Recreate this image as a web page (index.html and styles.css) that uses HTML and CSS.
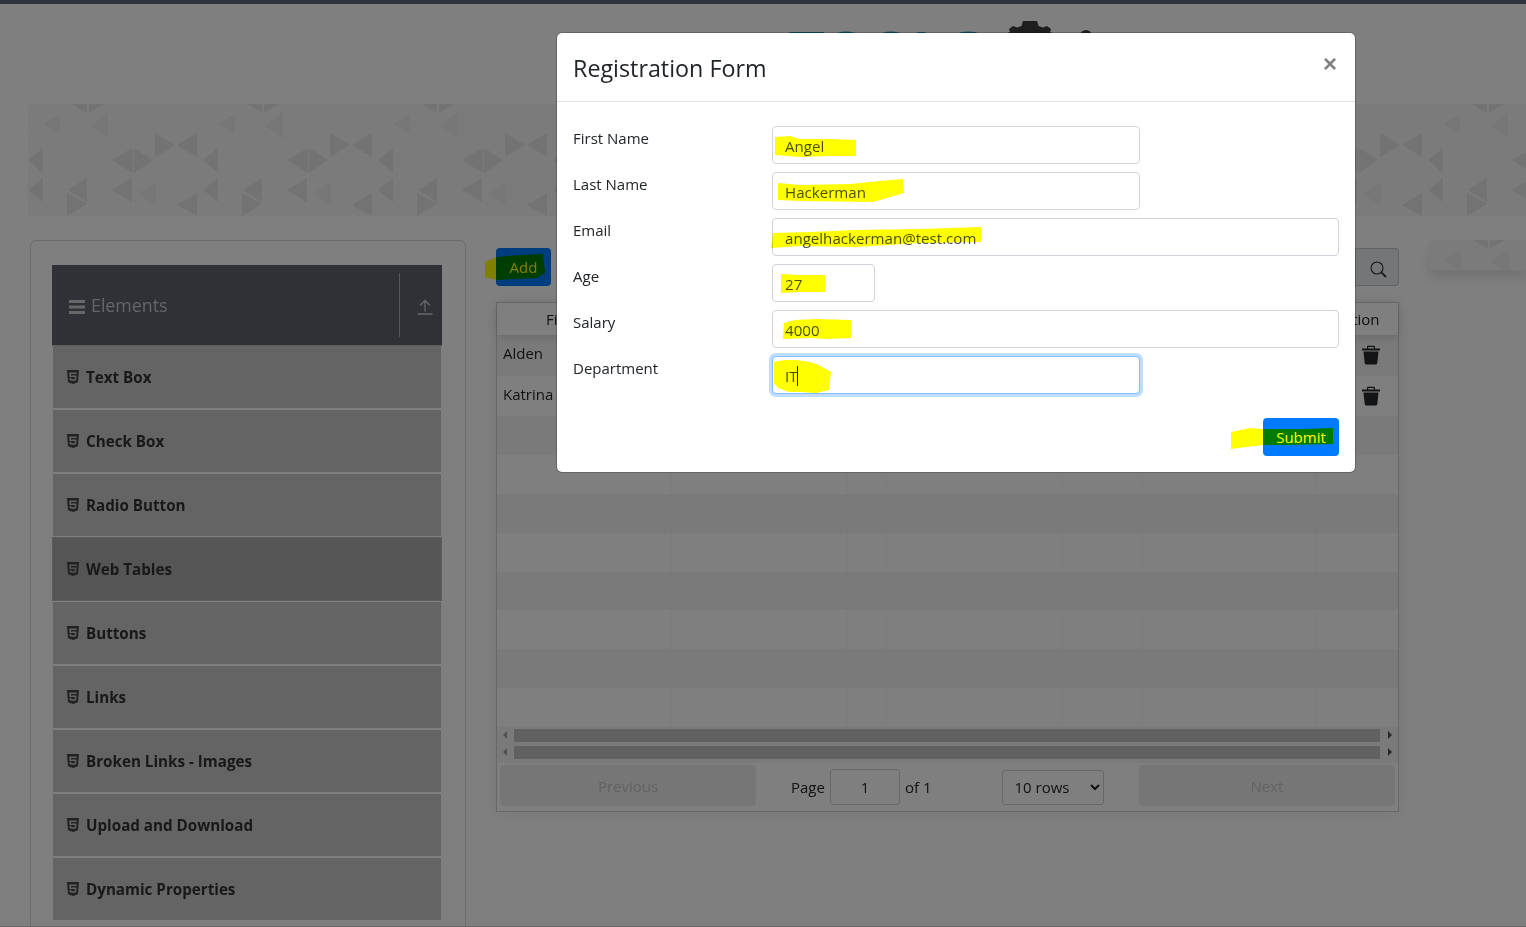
FILE: index.html
```html
<!DOCTYPE html>
<html lang="en">
<head>
<meta charset="utf-8">
<title>Registration Form</title>
<link rel="stylesheet" href="styles.css">
</head>
<body>
<svg class="defs" width="0" height="0" aria-hidden="true">
  <defs>
    <pattern id="tri" patternUnits="userSpaceOnUse" width="175" height="112">
      <rect width="175" height="112" fill="#f6f6f6"/>
      <g fill="none" stroke="#fcfcfc" stroke-width="1">
        <path d="M15 0V112M59 0V112M105 0V112M149 0V112"/>
        <path d="M0 26L44 0M59 0L105 26L149 0M0 56L59 22L105 56L149 26L175 11M0 86L59 52L105 86L149 56L175 41M0 56L59 86L105 112M105 26L175 70M59 22L0 0M0 86L44 112M149 112L175 96M105 86L59 112"/>
      </g>
      <g fill="#e6e6e6">
        <polygon points="0,56 15,44 15,69"/>
        <polygon points="84,56 105,44 105,69"/>
        <polygon points="106,44 106,69 125,56"/>
        <polygon points="127,29 127,53 147,41"/>
        <polygon points="149,41 169,29 169,53"/>
        <polygon points="59,74 59,98 40,86"/>
        <polygon points="0,86 15,74 15,98"/>
        <polygon points="84,86 104,74 104,98"/>
        <polygon points="39,89 39,112 59,100"/>
        <polygon points="169,89 169,112 149,101"/>
        <polygon points="44,0 59,0 59,9"/>
        <polygon points="61,0 76,0 61,9"/>
      </g>
      <g fill="#eeeeee">
        <polygon points="62,22 80,8 80,34"/>
        <polygon points="15,20 32,10 32,30"/>
        <polygon points="110,90 128,78 128,102"/>
      </g>
    </pattern>
  </defs>
</svg>

<div class="page">
  <div class="topbar"></div>
  <header class="site-header">
    <a class="logo" href="#">
      <span class="logo-word">TOOLS</span>
      <svg class="logo-gear" width="100" height="40" viewBox="0 0 100 40" aria-hidden="true">
        <path class="gear" d="M18 1H32L33.5 6L38 7.5L42 6L46 9L45 12L50 14V40H0V14L5 12L4 9L8 6L12 7.5L16.5 6Z"/>
        <circle class="gear" cx="81" cy="16" r="6"/>
      </svg>
    </a>
  </header>
  <svg class="banner" width="100%" height="112" aria-hidden="true"><rect width="100%" height="112" fill="url(#tri)"/></svg>

  <main class="main">
    <aside class="side-card">
      <div class="group-head">
        <div class="group-title">
          <svg class="menu-ico" width="16" height="16" viewBox="0 0 16 16" aria-hidden="true"><path d="M0 1h16v3H0zM0 6.5h16v3H0zM0 12h16v3H0z"/></svg>
          <span>Elements</span>
        </div>
        <div class="group-toggle">
          <svg width="16" height="16" viewBox="0 0 16 16" aria-hidden="true"><path d="M0.5 15h15M8 12.5V1.5M3 6.5l5-5 5 5" fill="none" stroke-width="1.3"/></svg>
        </div>
      </div>
      <ul class="menu">
        <li class="menu-item"><svg class="h5" viewBox="0 0 384 512" aria-hidden="true"><path d="M0 32l34.9 395.8L191.5 480l157.6-52.2L384 32H0zm308.2 127.9H124.4l4.1 49.4h175.6l-13.6 148.4-97.9 27v.3h-1.1l-98.7-27.3-6-75.8h47.7L138 320l53.5 14.5 53.7-14.5 6-62.2H84.3L71.5 112.2h241.1l-4.4 47.7z"/></svg>Text Box</li>
        <li class="menu-item"><svg class="h5" viewBox="0 0 384 512" aria-hidden="true"><path d="M0 32l34.9 395.8L191.5 480l157.6-52.2L384 32H0zm308.2 127.9H124.4l4.1 49.4h175.6l-13.6 148.4-97.9 27v.3h-1.1l-98.7-27.3-6-75.8h47.7L138 320l53.5 14.5 53.7-14.5 6-62.2H84.3L71.5 112.2h241.1l-4.4 47.7z"/></svg>Check Box</li>
        <li class="menu-item"><svg class="h5" viewBox="0 0 384 512" aria-hidden="true"><path d="M0 32l34.9 395.8L191.5 480l157.6-52.2L384 32H0zm308.2 127.9H124.4l4.1 49.4h175.6l-13.6 148.4-97.9 27v.3h-1.1l-98.7-27.3-6-75.8h47.7L138 320l53.5 14.5 53.7-14.5 6-62.2H84.3L71.5 112.2h241.1l-4.4 47.7z"/></svg>Radio Button</li>
        <li class="menu-item active"><svg class="h5" viewBox="0 0 384 512" aria-hidden="true"><path d="M0 32l34.9 395.8L191.5 480l157.6-52.2L384 32H0zm308.2 127.9H124.4l4.1 49.4h175.6l-13.6 148.4-97.9 27v.3h-1.1l-98.7-27.3-6-75.8h47.7L138 320l53.5 14.5 53.7-14.5 6-62.2H84.3L71.5 112.2h241.1l-4.4 47.7z"/></svg>Web Tables</li>
        <li class="menu-item"><svg class="h5" viewBox="0 0 384 512" aria-hidden="true"><path d="M0 32l34.9 395.8L191.5 480l157.6-52.2L384 32H0zm308.2 127.9H124.4l4.1 49.4h175.6l-13.6 148.4-97.9 27v.3h-1.1l-98.7-27.3-6-75.8h47.7L138 320l53.5 14.5 53.7-14.5 6-62.2H84.3L71.5 112.2h241.1l-4.4 47.7z"/></svg>Buttons</li>
        <li class="menu-item"><svg class="h5" viewBox="0 0 384 512" aria-hidden="true"><path d="M0 32l34.9 395.8L191.5 480l157.6-52.2L384 32H0zm308.2 127.9H124.4l4.1 49.4h175.6l-13.6 148.4-97.9 27v.3h-1.1l-98.7-27.3-6-75.8h47.7L138 320l53.5 14.5 53.7-14.5 6-62.2H84.3L71.5 112.2h241.1l-4.4 47.7z"/></svg>Links</li>
        <li class="menu-item"><svg class="h5" viewBox="0 0 384 512" aria-hidden="true"><path d="M0 32l34.9 395.8L191.5 480l157.6-52.2L384 32H0zm308.2 127.9H124.4l4.1 49.4h175.6l-13.6 148.4-97.9 27v.3h-1.1l-98.7-27.3-6-75.8h47.7L138 320l53.5 14.5 53.7-14.5 6-62.2H84.3L71.5 112.2h241.1l-4.4 47.7z"/></svg>Broken Links - Images</li>
        <li class="menu-item"><svg class="h5" viewBox="0 0 384 512" aria-hidden="true"><path d="M0 32l34.9 395.8L191.5 480l157.6-52.2L384 32H0zm308.2 127.9H124.4l4.1 49.4h175.6l-13.6 148.4-97.9 27v.3h-1.1l-98.7-27.3-6-75.8h47.7L138 320l53.5 14.5 53.7-14.5 6-62.2H84.3L71.5 112.2h241.1l-4.4 47.7z"/></svg>Upload and Download</li>
        <li class="menu-item"><svg class="h5" viewBox="0 0 384 512" aria-hidden="true"><path d="M0 32l34.9 395.8L191.5 480l157.6-52.2L384 32H0zm308.2 127.9H124.4l4.1 49.4h175.6l-13.6 148.4-97.9 27v.3h-1.1l-98.7-27.3-6-75.8h47.7L138 320l53.5 14.5 53.7-14.5 6-62.2H84.3L71.5 112.2h241.1l-4.4 47.7z"/></svg>Dynamic Properties</li>
      </ul>
    </aside>

    <section class="content">
      <div class="toolbar">
        <button class="btn add-btn" type="button">Add
          <svg class="mark-add" width="70" height="34" viewBox="480 250 70 34" aria-hidden="true"><path class="mark" d="M485 262L497 257L520 255L543 254L545 273L537 278L515 279L497 280L485 277Z"/></svg>
        </button>
        <div class="search">
          <input class="search-input" type="text" placeholder="Type to search">
          <span class="search-btn">
            <svg width="17" height="17" viewBox="0 0 17 17" aria-hidden="true"><circle cx="7" cy="7" r="6" fill="none" stroke-width="1.1"/><path d="M11.4 11.4L16 16" fill="none" stroke-width="1.8"/></svg>
          </span>
        </div>
      </div>

      <div class="table">
        <div class="row head">
          <div class="cell">First Name</div><div class="cell">Last Name</div><div class="cell">Age</div><div class="cell">Email</div><div class="cell">Salary</div><div class="cell">Department</div><div class="cell">Action</div>
        </div>
        <div class="row odd tall">
          <div class="cell name">Alden</div><div class="cell"></div><div class="cell"></div><div class="cell"></div><div class="cell"></div><div class="cell"></div>
          <div class="cell act"><svg class="trash" width="18" height="20" viewBox="0 0 18 20" aria-hidden="true"><path d="M5 3.5V1.5Q5 .8 5.7.8H12.3Q13 .8 13 1.5V3.5H11.8V2H6.2V3.5ZM0 3.5H18V5.5H0ZM1.5 6.5H16.5L15.3 18Q15.1 19.5 13.6 19.5H4.4Q2.9 19.5 2.7 18Z"/></svg></div>
        </div>
        <div class="row tall">
          <div class="cell name">Katrina</div><div class="cell"></div><div class="cell"></div><div class="cell"></div><div class="cell"></div><div class="cell"></div>
          <div class="cell act"><svg class="trash" width="18" height="20" viewBox="0 0 18 20" aria-hidden="true"><path d="M5 3.5V1.5Q5 .8 5.7.8H12.3Q13 .8 13 1.5V3.5H11.8V2H6.2V3.5ZM0 3.5H18V5.5H0ZM1.5 6.5H16.5L15.3 18Q15.1 19.5 13.6 19.5H4.4Q2.9 19.5 2.7 18Z"/></svg></div>
        </div>
        <div class="row odd"><div class="cell"></div><div class="cell"></div><div class="cell"></div><div class="cell"></div><div class="cell"></div><div class="cell"></div><div class="cell"></div></div>
        <div class="row"><div class="cell"></div><div class="cell"></div><div class="cell"></div><div class="cell"></div><div class="cell"></div><div class="cell"></div><div class="cell"></div></div>
        <div class="row odd"><div class="cell"></div><div class="cell"></div><div class="cell"></div><div class="cell"></div><div class="cell"></div><div class="cell"></div><div class="cell"></div></div>
        <div class="row"><div class="cell"></div><div class="cell"></div><div class="cell"></div><div class="cell"></div><div class="cell"></div><div class="cell"></div><div class="cell"></div></div>
        <div class="row odd"><div class="cell"></div><div class="cell"></div><div class="cell"></div><div class="cell"></div><div class="cell"></div><div class="cell"></div><div class="cell"></div></div>
        <div class="row"><div class="cell"></div><div class="cell"></div><div class="cell"></div><div class="cell"></div><div class="cell"></div><div class="cell"></div><div class="cell"></div></div>
        <div class="row odd"><div class="cell"></div><div class="cell"></div><div class="cell"></div><div class="cell"></div><div class="cell"></div><div class="cell"></div><div class="cell"></div></div>
        <div class="row"><div class="cell"></div><div class="cell"></div><div class="cell"></div><div class="cell"></div><div class="cell"></div><div class="cell"></div><div class="cell"></div></div>

        <div class="bars">
          <div class="bar"><i class="arrow left"></i><b class="thumb"></b><i class="arrow right"></i></div>
          <div class="bar"><i class="arrow left"></i><b class="thumb"></b><i class="arrow right"></i></div>
        </div>

        <div class="pager">
          <button class="page-btn" type="button">Previous</button>
          <div class="page-center">
            <span class="page-info">Page <input class="page-input" type="text" value="1"> of 1</span>
            <select class="rows-select"><option>10 rows</option></select>
          </div>
          <button class="page-btn" type="button">Next</button>
        </div>
      </div>
    </section>

    <div class="side-ad"><svg width="100%" height="30" aria-hidden="true"><rect width="100%" height="30" fill="url(#tri)"/></svg></div>
  </main>
</div>

<div class="backdrop"></div>

<div class="modal" role="dialog" aria-label="Registration Form">
  <div class="modal-head">
    <h5 class="modal-title">Registration Form</h5>
    <span class="close">×</span>
  </div>
  <form class="modal-body">
    <label class="label">First Name</label>
    <div class="field-line"><input class="input half" type="text" value="Angel"></div>
    <label class="label">Last Name</label>
    <div class="field-line"><input class="input half" type="text" value="Hackerman"></div>
    <label class="label">Email</label>
    <div class="field-line"><input class="input" type="text" value="angelhackerman@test.com"></div>
    <label class="label">Age</label>
    <div class="field-line"><input class="input short" type="text" value="27"></div>
    <label class="label">Salary</label>
    <div class="field-line"><input class="input" type="text" value="4000"></div>
    <label class="label">Department</label>
    <div class="field-line"><input class="input half focused" type="text" value="IT"></div>
    <div class="actions"><button class="btn submit" type="button">Submit</button></div>
  </form>
  <svg class="marks" width="798" height="439" viewBox="557 33 798 439" aria-hidden="true">
    <path class="mark" d="M775 137L790 136L800 139L830 139L856 140L856 156L830 156L800 157L775 155Z"/>
    <path class="mark" d="M778 183L800 185L850 184L880 181L903 179L904 193L873 202L800 201L778 200Z"/>
    <path class="mark" d="M773 233L810 232L856 230L920 229L981 227L981 242L920 243L856 247L800 246L771 248Z"/>
    <path class="mark" d="M781 274L800 275L825 275L825 292L800 292L781 293Z"/>
    <path class="mark" d="M784 323L795 320L816 319L851 320L851 338L826 339L810 338L783 339Z"/>
    <path class="mark" d="M774 362L785 360L796 360L810 362L819 365L831 372L829 390L816 393L800 392L789 392L778 388L774 383Z"/>
    <path class="mark" d="M1231 432L1250 428L1263 429L1302 429L1333 428L1333 444L1290 445L1263 445L1238 448L1231 449Z"/>
    <rect class="caret" x="797" y="366" width="1" height="20"/>
  </svg>
</div>
</body>
</html>
```

FILE: styles.css
```css
* { box-sizing: border-box; }
html, body { margin: 0; height: 100%; overflow: hidden; background: #fff; }
body { font-family: "Open Sans", "Noto Sans", sans-serif; font-size: 15px; color: #212529; }
.defs { position: absolute; }

.page { display: flex; flex-direction: column; height: 927px; background: #fff; overflow: hidden; }
.topbar { flex: none; height: 4px; background: #5f6678; }
.site-header { flex: none; height: 100px; padding-left: 789px; overflow: hidden; }
.logo { display: flex; align-items: flex-start; text-decoration: none; }
.logo-word { font-family: "Liberation Sans", sans-serif; font-weight: 700; font-size: 58px; line-height: 60px; margin-top: 18px; color: #1a9ccc; width: 216px; white-space: nowrap; }
.logo-gear { margin-top: 16px; overflow: visible; }
.gear { fill: #3c3c3c; }
.banner { flex: none; display: block; margin-left: 28px; width: calc(100% - 28px); }

.main { flex: none; height: 687px; margin-top: 24px; border-bottom: 1px solid #ccc; display: grid; grid-template-columns: 436px 903px 98px; column-gap: 30px; padding-left: 30px; align-items: start; overflow: hidden; }
.side-card { height: 720px; border: 1px solid #d8d8d8; border-radius: 6px; padding: 24px 21px 0; }
.group-head { display: flex; height: 81px; width: 390px; background: #5e636c; border-bottom: 1px solid #bbb; align-items: center; }
.group-title { flex: 1; display: flex; align-items: center; gap: 6px; padding-left: 17px; color: #c5c8cc; font-size: 17.8px; }
.menu-ico { fill: #cfcfcf; margin-top: 3px; }
.group-toggle { flex: none; width: 43px; height: 64px; border-left: 1px solid #a9a9a9; display: flex; align-items: center; padding-left: 17px; padding-top: 4px; stroke: #d0d0d0; }
.menu { list-style: none; margin: 0; padding: 0 0 0 1px; width: 389px; }
.menu-item { height: 62px; margin-bottom: 2px; background: #c8c8c8; display: flex; align-items: center; gap: 7px; padding-left: 14px; font-weight: 700; font-size: 15.2px; color: #333; }
.menu-item.active { background: #aaa; outline: 1px solid #bbb; }
.h5 { width: 12px; height: 16px; fill: #444; }

.content { display: flex; flex-direction: column; gap: 16px; }
.toolbar { display: flex; justify-content: space-between; height: 38px; margin-top: 8px; }
.btn { position: relative; border: 0; border-radius: 4px; background: #007bff; color: #fff; font: 15px "Open Sans", sans-serif; height: 38px; padding: 0 13px; }
.add-btn { width: 55px; }
.mark-add { position: absolute; left: -16px; top: 2px; overflow: visible; }
.mark { fill: #ff0; mix-blend-mode: multiply; }
.search { display: flex; width: 400px; }
.search-input { flex: 1; min-width: 0; border: 1px solid #ced4da; border-radius: 4px 0 0 4px; font: 15px "Open Sans", sans-serif; padding: 0 12px; }
.search-btn { flex: none; width: 43px; background: #e9ecef; border: 1px solid #c4c8cc; border-left: 0; border-radius: 0 4px 4px 0; display: flex; align-items: center; justify-content: center; stroke: #333; padding-top: 4px; padding-left: 3px; }

.table { border: 1px solid #d0d0d0; height: 510px; box-shadow: 0 0 15px rgba(0,0,0,.08); display: flex; flex-direction: column; }
.row { display: grid; grid-template-columns: 175px 176px 39px 176px 80px 174px 1fr; height: 38.8px; flex: none; background: #fff; }
.row.tall { height: 40.7px; }
.row.odd { background: #f5f5f5; }
.row.head { height: 32px; position: relative; box-shadow: 0 3px 8px rgba(0,0,0,.12); background: #fff; text-align: center; }
.cell { display: flex; align-items: center; padding: 0 6px; border-right: 1px solid #f9f9f9; white-space: nowrap; overflow: hidden; font-size: 15px; }
.odd .cell { border-right-color: #f1f1f1; }
.cell.name { padding-bottom: 4px; }
.head .cell { justify-content: center; }
.cell:last-child { border-right: 0; }
.cell.act { justify-content: flex-end; padding-right: 18px; }
.trash { fill: #27282c; }
.bars { flex: none; height: 36px; background: #f5f5f5; padding-top: 2px; }
.bar { display: flex; align-items: center; height: 17px; padding: 0 6px 4px 6px; }
.thumb { display: block; flex: 1; height: 13px; background: #c2c2c2; margin: 0 8px 0 7px; }
.arrow { display: block; width: 0; height: 0; border-style: solid; border-width: 4px 0 4px 4px; border-color: transparent; }
.arrow.left { border-width: 4px 4px 4px 0; border-right-color: #a0a0a0; }
.arrow.right { border-left-color: #505050; }

.pager { flex: 1; display: flex; align-items: center; padding: 0 3px 3px; justify-content: space-between; }
.page-btn { width: 256px; height: 41px; border: 0; border-radius: 4px; background: #ededed; color: #c4c4c4; font: 15px "Open Sans", sans-serif; padding-top: 2px; }
.page-center { flex: 1; display: flex; align-items: center; padding-left: 35px; }
.page-info { display: flex; align-items: center; gap: 5px; padding-top: 3px; }
.page-input { width: 70px; height: 36px; border: 1px solid #d0d0d0; border-radius: 3px; text-align: center; font: 15px "Open Sans", sans-serif; color: #212529; margin: 0; padding: 0; background: #fff; }
.rows-select { width: 102px; height: 35px; margin: 4px 0 0 71px; padding-left: 7px; border: 1px solid #d0d0d0; border-radius: 3px; font: 15px "Open Sans", sans-serif; color: #212529; background-color: #fff; }

.side-ad { height: 30px; box-shadow: 0 8px 12px rgba(0,0,0,.1); overflow: hidden; }
.side-ad svg { display: block; }

.backdrop { position: fixed; inset: 0; background: rgba(0,0,0,.5); }

.modal { position: fixed; left: 557px; top: 33px; width: 798px; height: 439px; background: #fff; border-radius: 5px; z-index: 2; overflow: hidden; isolation: isolate; box-shadow: 0 0 0 1px rgba(0,0,0,.2); }
.modal-head { height: 69px; display: flex; justify-content: space-between; align-items: flex-start; border-bottom: 1px solid #dee2e6; padding: 16px 18px 0 16px; }
.modal-title { margin: 0; font-size: 23.3px; line-height: 38px; font-weight: 400; color: #212529; }
.close { color: #808080; font-family: "Liberation Sans", sans-serif; font-weight: 700; font-size: 24px; line-height: 30px; }
.modal-body { display: grid; grid-template-columns: 199px 1fr; grid-auto-rows: 46px; padding: 24px 16px 0; }
.label { line-height: 24px; color: #212529; font-size: 15px; }
.field-line { display: block; }
.input { display: block; width: 100%; height: 38px; border: 1px solid #ced4da; border-radius: 4px; padding: 2px 12px 0; font: 15.1px "Open Sans", sans-serif; color: #495057; background: #fff; outline: 0; }
.input.half { width: 368px; }
.input.short { width: 103px; }
.input.focused { border-color: #80bdff; box-shadow: 0 0 0 3px rgba(0,123,255,.25); }
.actions { grid-column: 1 / -1; display: flex; justify-content: flex-end; padding-top: 16px; }
.submit { width: 76px; }
.marks { position: absolute; left: 0; top: 0; pointer-events: none; }
.caret { fill: #222; }
```
